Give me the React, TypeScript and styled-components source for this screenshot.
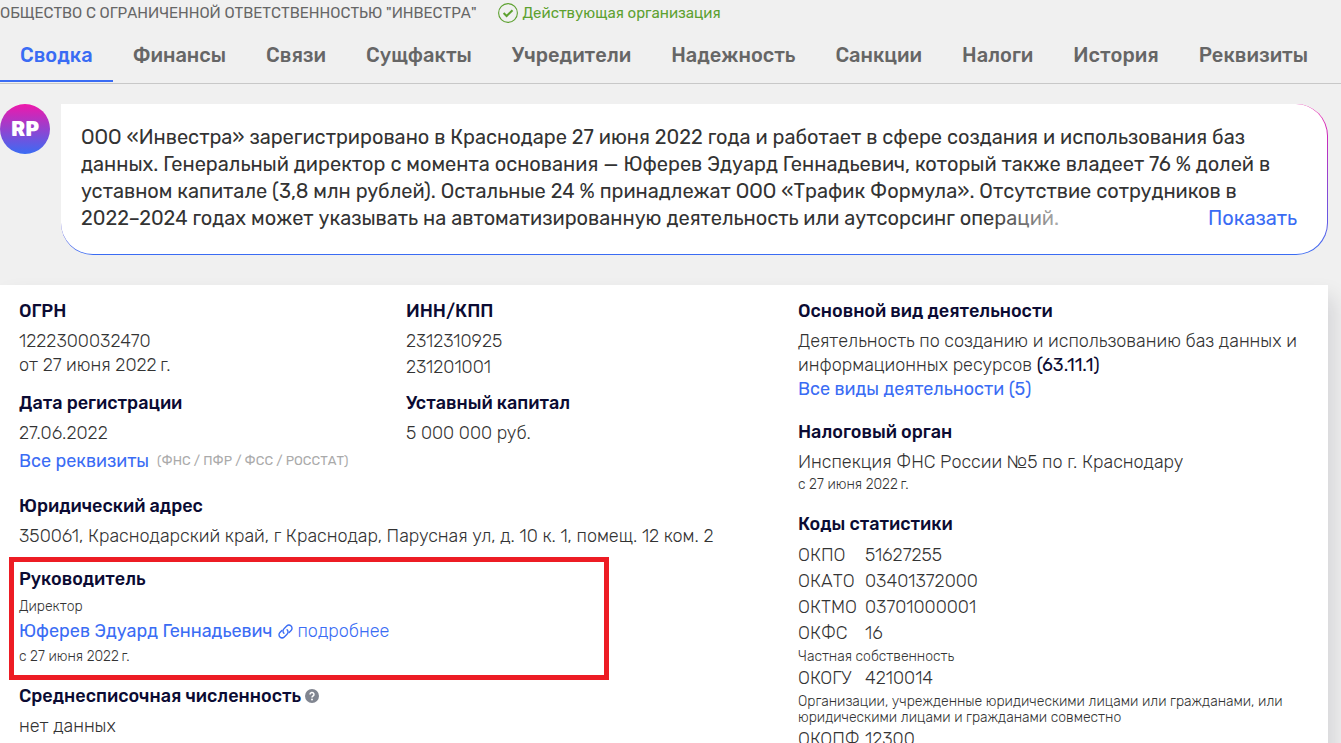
import React from "react";
import styled, { createGlobalStyle } from "styled-components";

const FONT = `Rubik, Roboto, "Liberation Sans", sans-serif`;
const BLUE = "#3a6cf4";

const GlobalStyle = createGlobalStyle`
  * { box-sizing: border-box; }
  body {
    margin: 0;
    background: #f0f0f0;
    color: #333;
    font-family: ${FONT};
    font-size: 18px;
    line-height: 24px;
  }
`;

const Header = styled.header`
  display: flex;
  align-items: center;
  gap: 21px;
  height: 26px;
  font-size: 15px;
`;

const CompanyName = styled.h1`
  margin: 0;
  font-size: 15px;
  font-weight: 400;
  color: #666;
  white-space: nowrap;
`;

const Status = styled.span`
  display: flex;
  align-items: center;
  gap: 5px;
  color: #5da130;
  white-space: nowrap;
`;

const Tabs = styled.nav`
  display: flex;
  height: 58px;
  padding-right: 13px;
  border-bottom: 1px solid #c8c8c8;
`;

const Tab = styled.a<{ $active?: boolean }>`
  flex: 1 1 auto;
  height: 56px;
  padding: 17px 0 0;
  border-bottom: 2px solid ${(p) => (p.$active ? BLUE : "transparent")};
  color: ${(p) => (p.$active ? BLUE : "#666")};
  font-size: 20px;
  font-weight: 500;
  text-align: center;
  text-decoration: none;
  white-space: nowrap;
`;

const SummaryRow = styled.section`
  display: flex;
  gap: 11px;
  margin: 20px 13px 30px 0;
`;

const Avatar = styled.div`
  display: flex;
  align-items: center;
  justify-content: center;
  flex: none;
  width: 50px;
  height: 50px;
  border-radius: 50%;
  background: linear-gradient(#ef18ab, ${BLUE});
  color: #fff;
  font-size: 20px;
  font-weight: 800;
`;

const Bubble = styled.div`
  position: relative;
  flex: 1;
  padding: 20px 20px 22px;
  border: solid transparent;
  border-width: 0 1px 1px 0;
  border-radius: 0 32px 32px 32px;
  background:
    linear-gradient(#fff, #fff) padding-box,
    linear-gradient(#ef18ab, ${BLUE}) border-box;
`;

const Summary = styled.p`
  margin: 0;
  font-size: 20px;
  line-height: 27px;
  white-space: nowrap;
`;

const ShowMore = styled.button`
  position: absolute;
  right: 30px;
  bottom: 22px;
  width: 310px;
  padding: 0;
  border: 0;
  background: linear-gradient(90deg, rgba(255, 255, 255, 0), #fff 120px);
  color: ${BLUE};
  font: 400 20px/27px ${FONT};
  text-align: right;
  cursor: pointer;
`;

const Card = styled.main`
  display: grid;
  grid-template-columns: 779fr 511fr;
  margin-right: 13px;
  padding: 14px 19px;
  background: #fff;
  box-shadow: 6px 12px 20px rgba(0, 10, 30, 0.12);
`;

const Pair = styled.div`
  display: grid;
  grid-template-columns: 387fr 392fr;
  row-gap: 12px;
`;

const Block = styled.section<{ $gap?: number }>`
  margin-top: ${(p) => p.$gap ?? 0}px;
`;

const Title = styled.h2`
  margin: 0 0 6px;
  color: #0b0b33;
  font-size: 18px;
  font-weight: 500;
  line-height: 24px;
`;

const Value = styled.div`
  font-weight: 300;
`;

const Lines = styled.div`
  display: grid;
  row-gap: 2px;
`;

const Note = styled.div<{ $top?: number }>`
  margin-top: ${(p) => p.$top ?? 3}px;
  font-size: 14px;
  font-weight: 300;
  line-height: 16px;
`;

const Link = styled.a`
  color: ${BLUE};
  text-decoration: none;
`;

const LinkRow = styled.div`
  display: flex;
  align-items: center;
  margin-top: 4px;
`;

const Registries = styled.span`
  margin-left: 8px;
  color: #aaa;
  font-size: 13px;
`;

const More = styled(Link)`
  display: flex;
  align-items: center;
  gap: 4px;
  margin-left: 6px;
  font-weight: 300;
`;

const Highlight = styled.section`
  width: 77%;
  margin: 9px 0 4px -10px;
  padding: 5px 5px 10px;
  border: 5px solid #ed1c24;
`;

const TitleRow = styled.div`
  display: flex;
  gap: 4px;
  align-items: baseline;
`;

const Help = styled.button`
  display: flex;
  padding: 0;
  border: 0;
  background: none;
  align-self: center;
  margin-bottom: 6px;
`;

const Code = styled.strong`
  color: #0b0b33;
  font-weight: 400;
`;

const CodesTable = styled.table`
  width: 100%;
  border-collapse: collapse;
  font-weight: 300;

  th,
  td {
    padding: 0;
    font-weight: 300;
    line-height: 26px;
    text-align: left;
  }
  th {
    width: 67px;
  }
`;

const NoteCell = styled.td`
  && {
    padding-top: 3px;
    font-size: 14px;
    line-height: 16px;
  }
`;

const tabs = [
  "Сводка",
  "Финансы",
  "Связи",
  "Сущфакты",
  "Учредители",
  "Надежность",
  "Санкции",
  "Налоги",
  "История",
  "Реквизиты",
];

const codes: { name: string; value: string; note?: React.ReactNode }[] = [
  { name: "ОКПО", value: "51627255" },
  { name: "ОКАТО", value: "03401372000" },
  { name: "ОКТМО", value: "03701000001" },
  { name: "ОКФС", value: "16", note: "Частная собственность" },
  {
    name: "ОКОГУ",
    value: "4210014",
    note: (
      <>
        Организации, учрежденные юридическими лицами или гражданами, или
        <br />
        юридическими лицами и гражданами совместно
      </>
    ),
  },
  { name: "ОКОПФ", value: "12300" },
];

const CheckIcon = () => (
  <svg width="20" height="20" viewBox="0 0 20 20" fill="none" stroke="currentColor" aria-hidden="true">
    <circle cx="10" cy="10" r="9.4" strokeWidth="1.1" />
    <path d="M5.6 10l3 3 5.9-5.8" strokeWidth="2" />
  </svg>
);

const ChainIcon = () => (
  <svg width="15" height="15" viewBox="0 0 15 15" fill="none" stroke="currentColor" strokeWidth="1.4" strokeLinecap="round" aria-hidden="true">
    <path d="M5.9 9.3a3.1 3.1 0 0 1 .1-4.5l2.7-2.7a3.1 3.1 0 0 1 4.4 4.4l-2 2" />
    <path d="M9.1 5.7a3.1 3.1 0 0 1-.1 4.5l-2.7 2.7a3.1 3.1 0 0 1-4.4-4.4l2-2" />
  </svg>
);

const HelpIcon = () => (
  <svg width="14" height="14" viewBox="0 0 14 14" aria-hidden="true">
    <circle cx="7" cy="7" r="7" fill="#808590" />
    <path d="M5 5.4a2 1.9 0 1 1 3 1.6c-.7.4-1 .7-1 1.4" fill="none" stroke="#fff" strokeWidth="1.5" />
    <circle cx="7" cy="10.5" r="0.95" fill="#fff" />
  </svg>
);

export default function App() {
  return (
    <>
      <GlobalStyle />
      <Header>
        <CompanyName>ОБЩЕСТВО С ОГРАНИЧЕННОЙ ОТВЕТСТВЕННОСТЬЮ "ИНВЕСТРА"</CompanyName>
        <Status>
          <CheckIcon />
          Действующая организация
        </Status>
      </Header>
      <Tabs>
        {tabs.map((t, i) => (
          <Tab key={t} href="#" $active={i === 0}>
            {t}
          </Tab>
        ))}
      </Tabs>
      <SummaryRow>
        <Avatar>RP</Avatar>
        <Bubble>
          <Summary>
            ООО «Инвестра» зарегистрировано в Краснодаре 27 июня 2022 года и работает в сфере создания и использования баз
            <br />
            данных. Генеральный директор с момента основания — Юферев Эдуард Геннадьевич, который также владеет 76 % долей в
            <br />
            уставном капитале (3,8 млн рублей). Остальные 24 % принадлежат ООО «Трафик Формула». Отсутствие сотрудников в
            <br />
            2022–2024 годах может указывать на автоматизированную деятельность или аутсорсинг операций.
          </Summary>
          <ShowMore type="button">Показать</ShowMore>
        </Bubble>
      </SummaryRow>
      <Card>
        <div>
          <Pair>
            <Block>
              <Title>ОГРН</Title>
              <Value>1222300032470</Value>
              <Value>от 27 июня 2022&thinsp;г.</Value>
            </Block>
            <Block>
              <Title>ИНН/КПП</Title>
              <Lines>
                <Value>2312310925</Value>
                <Value>231201001</Value>
              </Lines>
            </Block>
            <Block>
              <Title>Дата регистрации</Title>
              <Value>27.06.2022</Value>
              <LinkRow>
                <Link href="#">Все реквизиты</Link>
                <Registries>(ФНС / ПФР / ФСС / РОССТАТ)</Registries>
              </LinkRow>
            </Block>
            <Block>
              <Title>Уставный капитал</Title>
              <Value>5 000 000 руб.</Value>
            </Block>
          </Pair>
          <Block $gap={21}>
            <Title>Юридический адрес</Title>
            <Value>350061, Краснодарский край, г Краснодар, Парусная ул, д. 10 к. 1, помещ. 12 ком. 2</Value>
          </Block>
          <Highlight>
            <Title>Руководитель</Title>
            <Note $top={8}>Директор</Note>
            <LinkRow>
              <Link href="#">Юферев Эдуард Геннадьевич</Link>
              <More href="#">
                <ChainIcon />
                подробнее
              </More>
            </LinkRow>
            <Note $top={6}>с 27 июня 2022&thinsp;г.</Note>
          </Highlight>
          <Block>
            <TitleRow>
              <Title>Среднесписочная численность</Title>
              <Help type="button" aria-label="Справка">
                <HelpIcon />
              </Help>
            </TitleRow>
            <Value>нет данных</Value>
          </Block>
        </div>
        <div>
          <Block>
            <Title>Основной вид деятельности</Title>
            <Value>
              Деятельность по созданию и использованию баз данных и<br />
              информационных ресурсов <Code>(63.11.1)</Code>
            </Value>
            <Link href="#">Все виды деятельности (5)</Link>
          </Block>
          <Block $gap={19}>
            <Title>Налоговый орган</Title>
            <Value>Инспекция ФНС России №5 по г. Краснодару</Value>
            <Note>с 27 июня 2022&thinsp;г.</Note>
          </Block>
          <Block $gap={19}>
            <Title>Коды статистики</Title>
            <CodesTable>
              <tbody>
                {codes.map((c) => (
                  <React.Fragment key={c.name}>
                    <tr>
                      <th scope="row">{c.name}</th>
                      <td>{c.value}</td>
                    </tr>
                    {c.note && (
                      <tr>
                        <NoteCell colSpan={2}>{c.note}</NoteCell>
                      </tr>
                    )}
                  </React.Fragment>
                ))}
              </tbody>
            </CodesTable>
          </Block>
        </div>
      </Card>
    </>
  );
}
